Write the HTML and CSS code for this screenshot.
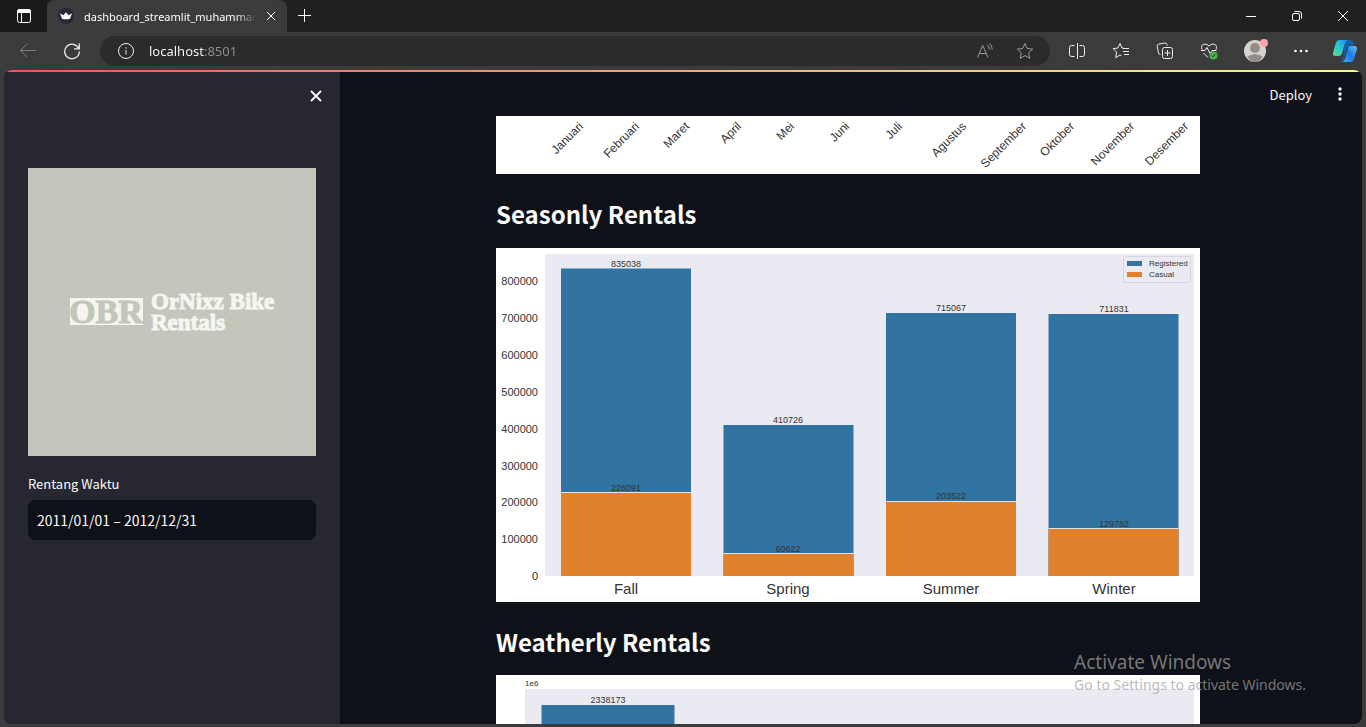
FILE: index.html
```html
<!DOCTYPE html>
<html lang="id">
<head>
<meta charset="utf-8">
<title>dashboard_streamlit_muhammad</title>
<link rel="stylesheet" href="styles.css">
</head>
<body>
<div class="browser">
  <header class="tabbar">
    <button class="tab-menu" aria-label="Tab actions"><svg width="16" height="16" viewBox="0 0 16 16"><rect x="1.5" y="1.5" width="13" height="13" rx="2"/><path d="M1.5 3.5a2 2 0 0 1 2-2h9a2 2 0 0 1 2 2V4.500h-13z" fill="#fff"/><path d="M5.500 5v9.500"/></svg></button>
    <div class="tab">
      <svg class="solid" width="18" height="18" viewBox="0 0 18 18"><circle cx="9" cy="9" r="8" fill="#262738"/><path d="M3 6.300 6.300 8.300 9 5.300l2.700 3L15 6.300l-2 5.400Q9 13 5 11.700z" fill="#fff"/></svg>
      <span class="tab-title">dashboard_streamlit_muhammad</span>
      <button class="tab-close" aria-label="Close tab"><svg width="10" height="10" viewBox="0 0 10 10"><path d="M1 1l8 8M9 1 1 9"/></svg></button>
    </div>
    <button class="new-tab" aria-label="New tab"><svg width="14" height="14" viewBox="0 0 14 14"><path d="M6.500 0v13M0 6.500h13"/></svg></button>
    <div class="window-controls">
      <button aria-label="Minimize"><svg width="12" height="12" viewBox="0 0 12 12"><path d="M1 6.500h10"/></svg></button>
      <button aria-label="Restore"><svg width="12" height="12" viewBox="0 0 12 12"><rect x="1.500" y="3.500" width="7" height="7" rx="1.500"/><path d="M3.500 1.500H8a2.500 2.500 0 0 1 2.500 2.500v4.500"/></svg></button>
      <button aria-label="Close"><svg width="12" height="12" viewBox="0 0 12 12"><path d="M1 1l10 10M11 1 1 11"/></svg></button>
    </div>
  </header>

  <nav class="toolbar">
    <button class="nav-button muted" aria-label="Back"><svg width="18" height="16" viewBox="0 0 18 16"><path d="M17 7.500H1.500M8 1 1.500 7.500 8 14"/></svg></button>
    <button class="nav-button" aria-label="Refresh"><svg width="18" height="18" viewBox="0 0 18 18"><path d="M15.800 6.800A7.300 7.300 0 1 0 16.300 9.500M16.300 1.500v5.300h-5.300" stroke-width="1.300"/></svg></button>
    <div class="address">
      <svg width="18" height="18" viewBox="0 0 18 18"><circle cx="9" cy="9" r="7.500"/><path d="M9 8v4.500M9 5.200v1.500"/></svg>
      <input class="url" type="text" aria-label="Address" value="localhost:8501">
      <button class="muted-light" aria-label="Read aloud"><svg width="18" height="18" viewBox="0 0 18 18"><path d="M1.500 15.500 6.700 3.500 12 15.500M3.300 11.500h6.800M11.300 3q2 1.500 2 4.500M13.500 1.500q2.700 2.300 2.700 6"/></svg></button>
      <button class="muted-light" aria-label="Add to favorites"><svg width="18" height="18" viewBox="0 0 18 18"><path d="M9 1.500l2.300 5 5.400.6-4 3.700 1.100 5.500L9 13.600l-4.800 2.700 1.100-5.500-4-3.700 5.400-.6z" stroke-linejoin="round"/></svg></button>
    </div>
    <div class="tools">
      <button aria-label="Split screen"><svg width="18" height="18" viewBox="0 0 18 18"><path d="M9.500 1v16M6.500 3.500h-3a2 2 0 0 0-2 2v7a2 2 0 0 0 2 2h3M11.500 3.500h3a2 2 0 0 1 2 2v7a2 2 0 0 1-2 2h-3"/></svg></button>
      <button aria-label="Favorites"><svg width="18" height="18" viewBox="0 0 18 18"><path d="M11.500 6.200 10 6 8 1.500 5.800 6l-4.600.7 3.400 3.500-.9 5.500L8 13l1.500.8M11 6.500h6M11 9.500h6M12 12.500h5" stroke-linejoin="round"/></svg></button>
      <button aria-label="Collections"><svg width="18" height="18" viewBox="0 0 18 18"><rect x="6.500" y="5.500" width="10" height="11" rx="2"/><path d="M11.500 8v6M8.500 11h6M4.500 12.500a2 2 0 0 1-2-1.500L1.200 4.500a2 2 0 0 1 1.500-2.400l6-1.100a2 2 0 0 1 2.300 1.500l.3 1"/></svg></button>
      <button aria-label="Browser essentials"><svg width="18" height="18" viewBox="0 0 18 18"><path d="M2 7.500C-.2 2.500 5 .2 9 4c4-3.800 9.200-1.500 7 3.500M1 8.500h4l2-3 3 6 2-3h4.500M3.500 11 8 15.500"/><circle cx="13.500" cy="13.500" r="4" fill="#4caf50" stroke="none"/><path d="M11.700 13.500l1.300 1.300 2.300-2.600" stroke="#173c1a"/></svg></button>
      <button aria-label="Profile"><svg class="solid" width="26" height="26" viewBox="0 0 26 26"><circle cx="13" cy="13" r="11" fill="#d6d2ce"/><circle cx="13" cy="10" r="5" fill="#918d8a"/><path d="M5.500 18.500q7.500-5 15 0-3 5.500-7.500 5.500t-7.500-5.500" fill="#918d8a"/><circle cx="22" cy="5" r="4" fill="#f7a6ad"/></svg></button>
      <button aria-label="Settings and more"><svg class="solid" width="16" height="16" viewBox="0 0 16 16" fill="#fff"><circle cx="2.500" cy="8" r="1.300"/><circle cx="8" cy="8" r="1.300"/><circle cx="13.500" cy="8" r="1.300"/></svg></button>
      <button aria-label="Copilot"><svg class="solid" width="26" height="26" viewBox="0 0 26 26">
        <defs><linearGradient id="cp1" x1="0" y1="1" x2="1" y2="0"><stop offset="0" stop-color="#63d981"/><stop offset=".45" stop-color="#2dcacb"/><stop offset="1" stop-color="#168ff0"/></linearGradient><linearGradient id="cp2" x1="0" y1="1" x2="1" y2="0"><stop offset="0" stop-color="#35b5f5"/><stop offset=".5" stop-color="#2277e8"/><stop offset="1" stop-color="#5dc5fb"/></linearGradient></defs>
        <path d="M12.500 2h6q2 0 2.600 2l.9 3.500h-4q-2 0-2.700 2L12 21q-1 3-3.500 3 2-2 3-5z" fill="#1461a8"/>
        <path d="M7 2h8.500q-2 1-2.700 3.500l-2.500 9Q9.500 18 6.500 18H3.500q-3.300 0-2.400-3.500L4 4.500Q4.800 2 7 2z" fill="url(#cp1)"/><path d="M17.500 8h5q3 0 2.300 3.500l-3 10Q21 24 19 24h-9q2.500-1 3.200-3.500l2.500-9Q16 8 17.500 8z" fill="url(#cp2)"/></svg></button>
    </div>
  </nav>

  <div class="page">
    <div class="decoration"></div>
    <aside class="sidebar">
      <button class="sidebar-close" aria-label="Close sidebar"><svg width="12" height="12" viewBox="0 0 12 12"><path d="M1 1l10 10M11 1 1 11" stroke-width="1.800"/></svg></button>
      <svg class="logo" viewBox="0 0 288 288" role="img" aria-label="OrNixz Bike Rentals">
        <rect width="288" height="288" fill="#c4c6bc"/>
        <rect x="42" y="130" width="73" height="27" fill="#f5f6ee"/>
        <text x="78" y="155" class="logo-mark">OBR</text>
        <text x="123" y="141" class="logo-name">OrNixz Bike</text>
        <text x="123" y="162" class="logo-name">Rentals</text>
      </svg>
      <label class="field-label" for="range">Rentang Waktu</label>
      <input class="date-range" id="range" type="text" value="2011/01/01 – 2012/12/31">
    </aside>

    <main class="main">
      <div class="app-header">
        <button class="deploy">Deploy</button>
        <button class="app-menu" aria-label="Main menu"><svg class="solid" width="16" height="16" viewBox="0 0 16 16" fill="#fafafa"><circle cx="8" cy="3" r="1.700"/><circle cx="8" cy="8" r="1.700"/><circle cx="8" cy="13" r="1.700"/></svg></button>
      </div>
      <div class="content">
        <svg class="chart" viewBox="0 0 704 58" role="img" aria-label="Monthly rentals">
          <rect width="704" height="58" fill="#fff"/>
          <g class="month">
            <text transform="translate(88 11) rotate(-45)">Januari</text>
            <text transform="translate(144 11) rotate(-45)">Februari</text>
            <text transform="translate(194 11) rotate(-45)">Maret</text>
            <text transform="translate(246 11) rotate(-45)">April</text>
            <text transform="translate(299 11) rotate(-45)">Mei</text>
            <text transform="translate(354 11) rotate(-45)">Juni</text>
            <text transform="translate(407 11) rotate(-45)">Juli</text>
            <text transform="translate(471 11) rotate(-45)">Agustus</text>
            <text transform="translate(531 11) rotate(-45)">September</text>
            <text transform="translate(579 11) rotate(-45)">Oktober</text>
            <text transform="translate(639 11) rotate(-45)">November</text>
            <text transform="translate(693 11) rotate(-45)">Desember</text>
          </g>
        </svg>
        <h2>Seasonly Rentals</h2>
        <svg class="chart" viewBox="0 0 704 354" role="img" aria-label="Seasonly rentals">
          <rect width="704" height="354" fill="#fff"/>
          <rect x="49" y="6" width="649" height="322" fill="#eaeaf2"/>
          <g class="tick">
            <text x="42" y="37">800000</text><text x="42" y="74">700000</text><text x="42" y="111">600000</text>
            <text x="42" y="148">500000</text><text x="42" y="185">400000</text><text x="42" y="222">300000</text>
            <text x="42" y="258">200000</text><text x="42" y="295">100000</text><text x="42" y="332">0</text>
          </g>
          <g class="registered">
            <rect x="65" y="20.500" width="130" height="307.500"/><rect x="227.500" y="177" width="130" height="151"/>
            <rect x="390" y="65" width="130" height="263"/><rect x="552.500" y="66" width="130" height="262"/>
          </g>
          <g class="casual">
            <rect x="65" y="245" width="130" height="83"/><rect x="227.500" y="306" width="130" height="22"/>
            <rect x="390" y="253" width="130" height="75"/><rect x="552.500" y="280" width="130" height="48"/>
          </g>
          <g class="bar-edge"><path d="M65 244.500h130M227.500 305.500h130M390 253.500h130M552.500 280.500h130"/></g>
          <g class="value">
            <text x="130" y="19">835038</text><text x="292" y="175">410726</text><text x="455" y="63">715067</text><text x="618" y="64">711831</text>
            <text x="130" y="243">226091</text><text x="292" y="304">60622</text><text x="455" y="251">203522</text><text x="618" y="279">129782</text>
          </g>
          <g class="season">
            <text x="130" y="346">Fall</text><text x="292" y="346">Spring</text><text x="455" y="346">Summer</text><text x="618" y="346">Winter</text>
          </g>
          <rect x="627.500" y="8.500" width="67" height="26" rx="1" fill="#eaeaf2" stroke="#d6d6de"/>
          <rect x="631" y="13" width="15" height="5" fill="#3274a1"/><rect x="631" y="24" width="15" height="5" fill="#e1812c"/>
          <g class="legend"><text x="653" y="18">Registered</text><text x="653" y="29">Casual</text></g>
        </svg>
        <h2>Weatherly Rentals</h2>
        <svg class="chart" viewBox="0 0 704 354" role="img" aria-label="Weatherly rentals">
          <rect width="704" height="354" fill="#fff"/>
          <rect x="29" y="14" width="669" height="314" fill="#eaeaf2"/>
          <g class="registered"><rect x="45.500" y="30" width="133" height="298"/></g>
          <g class="value"><text x="112" y="28">2338173</text></g>
          <g class="legend"><text x="29" y="11">1e6</text></g>
        </svg>
      </div>
    </main>
  </div>
</div>
<div class="watermark"><p class="watermark-title">Activate Windows</p><p class="watermark-text">Go to Settings to activate Windows.</p></div>
</body>
</html>
```
FILE: styles.css
```css
* { box-sizing: border-box; }
body { margin: 0; background: #3b3b3b; color: #fafafa; font-family: "Noto Sans CJK SC", "Noto Sans", sans-serif; }
button { display: flex; align-items: center; justify-content: center; padding: 0; border: 0; background: none; color: inherit; font: inherit; cursor: pointer; }
svg { display: block; flex: none; stroke-width: 1; }
svg:not(.solid) { fill: none; stroke: currentColor; }
input { min-width: 0; border: 0; outline: 0; }

.browser { display: flex; flex-direction: column; height: 100vh; overflow: hidden; }

.tabbar { display: flex; flex: none; height: 32px; background: #202020; color: #fff; }
.tab-menu { width: 47px; background: #1b1b1b; }
.tab { display: flex; align-items: center; width: 240px; padding: 0 10px; gap: 9px; border-radius: 8px 8px 0 0; background: #3b3b3b; }
.tab-title { flex: 1; overflow: hidden; white-space: nowrap; font: 11px "Noto Sans", sans-serif; mask-image: linear-gradient(90deg, #000 88%, transparent); }
.tab-close { width: 12px; }
.new-tab { width: 36px; }
.window-controls { display: flex; margin-left: auto; }
.window-controls button { width: 46px; }

.toolbar { display: flex; flex: none; align-items: center; height: 38px; padding-left: 6px; background: #3b3b3b; color: #eee; }
.nav-button { width: 44px; height: 36px; }
.muted { color: #7d7d7d; }
.muted-light { color: #999; }
.address { display: flex; flex: 1; align-items: center; height: 30px; margin-left: 6px; padding: 0 16px 0 17px; border-radius: 15px; background: #2b2b2b; }
.url { flex: 1; margin-left: 14px; padding: 0; font: 13px "Noto Sans", sans-serif; color: transparent; background: linear-gradient(90deg, #fff 56px, #8f8f8f 56px); -webkit-background-clip: text; background-clip: text; }
.address button { width: 18px; margin-left: 22px; }
.tools { display: flex; padding-left: 5px; }
.tools button { width: 44px; height: 36px; }
.tools button:nth-child(5) { width: 48px; }
.tools button:last-child { width: 43px; }

.page { display: grid; grid-template-columns: 336px 1fr; grid-template-rows: 2px minmax(0, 1fr); flex: 1; min-height: 0; margin: 0 4px 3px; border-radius: 8px; overflow: hidden; background: #0e1117; }
.decoration { grid-column: 1 / -1; background: linear-gradient(90deg, #f4505c, #f3ff84); }
.sidebar { display: flex; flex-direction: column; padding: 16px 24px; background: #262730; }
.sidebar-close { align-self: flex-end; width: 16px; height: 16px; margin-right: -8px; }
.sidebar .logo { width: 100%; margin-top: 64px; stroke: none; }
.logo-mark { font: bold 34px "Liberation Serif", serif; fill: #c4c6bc; stroke: #c4c6bc; text-anchor: middle; }
.logo-name { font: bold 23px "Liberation Serif", serif; fill: #f5f6ee; stroke: #f5f6ee; }
.field-label { margin: 18px 0 6px; font-size: 13px; line-height: 20px; }
.date-range { width: 100%; height: 40px; padding: 0 9px; border-radius: 8px; background: #0e1117; color: #fafafa; font: 14px "Noto Sans CJK SC", sans-serif; }

.main { display: flex; flex-direction: column; min-width: 0; min-height: 0; padding-right: 6px; overflow: hidden; }
.app-header { display: flex; flex: none; align-items: center; justify-content: flex-end; height: 44px; margin-right: -6px; padding-right: 14px; gap: 20px; }
.deploy { font-size: 13px; }
.content { width: 100%; max-width: 704px; margin: 0 auto; }
.content .chart { width: 100%; stroke: none; font-family: "Liberation Sans", Arial, sans-serif; fill: #333; }
h2 { margin: 0; padding: 22px 0 16px; font-size: 24px; line-height: 36px; font-weight: 700; }
.chart + h2 ~ .chart + h2 { padding-bottom: 15px; }
.month { font-size: 12px; text-anchor: end; }
.tick { font-size: 11px; text-anchor: end; }
.value { font-size: 9px; text-anchor: middle; }
.season { font-size: 15px; text-anchor: middle; }
.legend { font-size: 8px; }
.registered { fill: #3274a1; }
.casual { fill: #e1812c; }
.bar-edge { stroke: #dfe3ea; stroke-width: 1; }

.watermark { position: absolute; right: 60px; bottom: 32px; color: rgba(160, 160, 160, .72); font-family: "Noto Sans", sans-serif; pointer-events: none; }
.watermark p { margin: 0; }
.watermark-title { font-size: 19px; line-height: 26px; }
.watermark-text { font-size: 14px; line-height: 20px; }
```
